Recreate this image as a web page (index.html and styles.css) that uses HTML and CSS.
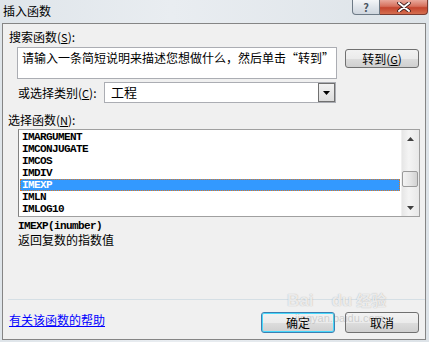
FILE: index.html
```html
<!DOCTYPE html>
<html lang="zh-CN">
<head>
  <meta charset="UTF-8">
  <title>插入函数</title>
  <link rel="stylesheet" href="styles.css">
</head>
<body>
  <div class="window">
    <div class="titlebar">
      <span class="title">插入函数</span>
      <div class="caption-btns">
        <span class="cap-btn help">?</span>
        <span class="cap-btn close">
          <svg width="14" height="10" viewBox="0 0 14 10"><path d="M2 1 L12 9 M12 1 L2 9" stroke="#3a1a1a" stroke-width="3.6" stroke-linecap="round"/><path d="M2 1 L12 9 M12 1 L2 9" stroke="#fff" stroke-width="2" stroke-linecap="round"/></svg>
        </span>
      </div>
    </div>

    <div class="client">
      <div class="label l-search">搜索函数(<u>S</u>):</div>
      <div class="search-row">
        <div class="search-box">请输入一条简短说明来描述您想做什么，然后单击“转到”</div>
        <button class="btn go">转到(<u>G</u>)</button>
      </div>

      <div class="cat-row">
        <span class="label">或选择类别(<u>C</u>):</span>
        <div class="select">
          <span class="select-text">工程</span>
          <span class="drop"><svg width="7" height="4" viewBox="0 0 7 4"><path d="M0 0 H7 L3.5 4 Z" fill="#000"/></svg></span>
        </div>
      </div>

      <div class="label l-func">选择函数(<u>N</u>):</div>
      <div class="listbox">
        <ul class="items">
          <li>IMARGUMENT</li>
          <li>IMCONJUGATE</li>
          <li>IMCOS</li>
          <li>IMDIV</li>
          <li class="selected">IMEXP</li>
          <li>IMLN</li>
          <li>IMLOG10</li>
        </ul>
        <div class="scrollbar">
          <span class="arrow"><svg width="7" height="4" viewBox="0 0 7 4"><path d="M3.5 0 L7 4 H0 Z" fill="#404040"/></svg></span>
          <span class="track"><span class="thumb"></span></span>
          <span class="arrow"><svg width="7" height="4" viewBox="0 0 7 4"><path d="M0 0 H7 L3.5 4 Z" fill="#404040"/></svg></span>
        </div>
      </div>

      <div class="syntax">IMEXP(inumber)</div>
      <div class="desc">返回复数的指数值</div>

      <div class="separator"></div>

      <div class="footer">
        <a class="help-link" href="#">有关该函数的帮助</a>
        <div class="actions">
          <button class="btn default">确定</button>
          <button class="btn">取消</button>
        </div>
      </div>

      <div class="watermark">
        <span class="wm-bai">Bai</span><span class="wm-du">du</span><span class="wm-jy">经验</span>
        <div class="wm-url">jingyan.baidu.com</div>
      </div>
    </div>
  </div>
</body>
</html>
```

FILE: styles.css
```css
body {
  margin: 0;
  font-family: "Noto Sans CJK SC", "Noto Sans", sans-serif;
  font-size: 12px;
  color: #000;
}
.window {
  width: 429px;
  height: 342px;
  background: linear-gradient(to right, #dfe5ea, #e9edf1 40%, #dde3e8);
  overflow: hidden;
}
.titlebar {
  height: 23px;
  display: flex;
  justify-content: space-between;
}
.title {
  padding: 3px 0 0 3px;
  line-height: 15px;
}
.caption-btns {
  display: flex;
  margin-right: 1px;
  height: 15px;
}
.cap-btn {
  display: flex;
  align-items: center;
  justify-content: center;
  border: 1px solid #6d7a86;
  border-top: none;
}
.help {
  width: 26px;
  border-radius: 0 0 0 4px;
  background: linear-gradient(#f4f6f8, #dfe4ea 50%, #cfd6de);
  color: #4a5560;
  font-size: 11px;
  font-weight: bold;
  line-height: 14px;
}
.close {
  width: 47px;
  border-left: none;
  border-color: #7a3a30;
  border-radius: 0 0 4px 0;
  background: linear-gradient(#e9a99c, #d6705c 45%, #c4452e 55%, #d56e50);
}

.client {
  position: relative;
  height: 315px;
  margin: 0 3px 0 2px;
  border: 1px solid #858585;
  background: #f0f0f0;
}
.label {
  line-height: 14px;
}
.label u, .btn u {
  text-decoration: underline;
  font-size: 11px;
}
.l-search {
  margin: 6px 0 0 6px;
}
.search-row {
  display: flex;
  align-items: flex-start;
  margin: 3px 0 0 14px;
}
.search-box {
  box-sizing: border-box;
  width: 320px;
  height: 32px;
  padding: 2px 4px;
  border: 1px solid #abadb3;
  background: #fff;
  line-height: 15px;
  white-space: nowrap;
}
.btn {
  box-sizing: border-box;
  width: 74px;
  height: 21px;
  padding: 0;
  border: 1px solid #707070;
  border-radius: 3px;
  background: linear-gradient(#f2f2f2, #ebebeb 50%, #dddddd 51%, #cfcfcf);
  font-family: inherit;
  font-size: 12px;
  color: #000;
}
.go {
  height: 19px;
  margin: 2px 0 0 8px;
  line-height: 15px;
}
.cat-row {
  display: flex;
  align-items: center;
  margin: 3px 0 0 15px;
}
.cat-row .label {
  width: 86px;
}
.select {
  box-sizing: border-box;
  width: 232px;
  height: 21px;
  display: flex;
  justify-content: space-between;
  border: 1px solid #abadb3;
  background: #fff;
}
.select-text {
  padding-left: 6px;
  line-height: 18px;
  font-size: 13px;
}
.drop {
  box-sizing: border-box;
  width: 17px;
  display: flex;
  align-items: center;
  justify-content: center;
  border: 1px solid #707070;
  background: linear-gradient(#f2f2f2, #dcdcdc);
}
.l-func {
  margin: 10px 0 0 5px;
}
.listbox {
  box-sizing: border-box;
  width: 402px;
  height: 88px;
  margin: 2px 0 0 15px;
  display: flex;
  border: 1px solid #a0a0a0;
  border-left-color: #828282;
  background: #fff;
}
.items {
  flex: 1;
  margin: 1px 1px 0 1px;
  padding: 0;
  list-style: none;
  font-family: "Liberation Mono", monospace;
  font-weight: bold;
  font-size: 11px;
  letter-spacing: -0.6px;
}
.items li {
  box-sizing: border-box;
  height: 12px;
  line-height: 12px;
  padding-left: 2px;
}
.items .selected {
  background: #3399ff;
  color: #fff;
  outline: 1px dotted #e07a20;
  outline-offset: -1px;
}
.scrollbar {
  width: 17px;
  display: flex;
  flex-direction: column;
  background: linear-gradient(to right, #e6e6e6, #f4f4f4 40%, #e8e8e8);
  border-left: 1px solid #f0f0f0;
}
.arrow {
  height: 17px;
  display: flex;
  align-items: center;
  justify-content: center;
}
.track {
  flex: 1;
  position: relative;
}
.thumb {
  position: absolute;
  left: 0;
  right: 1px;
  top: 24px;
  height: 16px;
  box-sizing: border-box;
  border: 1px solid #9a9a9a;
  border-radius: 2px;
  background: linear-gradient(to right, #f3f3f3, #e6e6e6 50%, #d2d2d2);
}
.syntax {
  margin: 2px 0 0 15px;
  font-family: "Liberation Mono", monospace;
  font-weight: bold;
  font-size: 11px;
  letter-spacing: -0.6px;
  line-height: 14px;
}
.desc {
  margin: 0 0 0 15px;
  line-height: 14px;
}
.separator {
  height: 1px;
  margin: 52px 0 0 5px;
  background: #d5dfe5;
}
.footer {
  display: flex;
  justify-content: space-between;
  align-items: flex-start;
  margin: 12px 6px 0 6px;
}
.help-link {
  color: #0000ff;
  text-decoration: underline;
  line-height: 14px;
  margin-top: 1px;
}
.actions {
  display: flex;
  gap: 10px;
}
.default {
  border-color: #3c7fb1;
  box-shadow: inset 0 0 0 1px #48d8fb;
}
.watermark {
  position: absolute;
  left: 284px;
  top: 266px;
  color: rgba(255, 255, 255, 0.75);
  text-shadow: 0 0 1px rgba(120, 120, 120, 0.6);
  font-family: "Liberation Sans", sans-serif;
  font-weight: bold;
  line-height: 20px;
  pointer-events: none;
}
.wm-bai, .wm-du {
  font-size: 17px;
}
.wm-du {
  margin-left: 18px;
}
.wm-jy {
  margin-left: 4px;
  font-size: 15px;
  font-family: "Noto Sans CJK SC", sans-serif;
}
.wm-url {
  margin: 0 0 0 8px;
  font-size: 11px;
  line-height: 12px;
  font-weight: normal;
  color: rgba(140, 140, 140, 0.35);
  text-shadow: none;
}
```
